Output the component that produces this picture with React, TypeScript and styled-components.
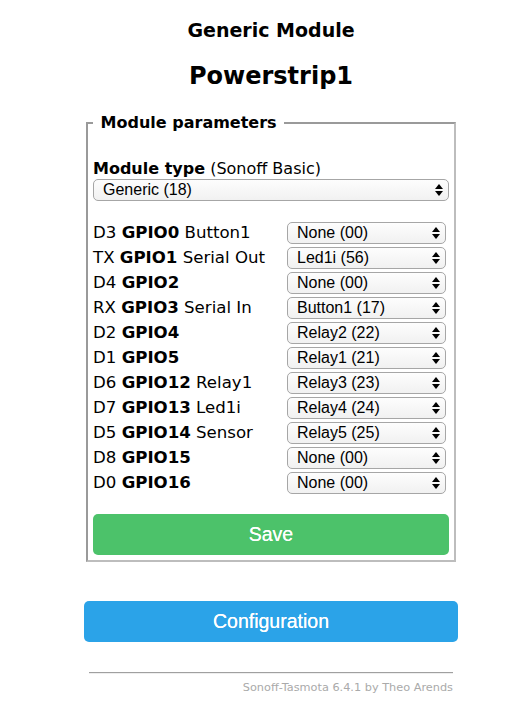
import React from "react";
import styled, { createGlobalStyle } from "styled-components";

const GlobalStyle = createGlobalStyle`
  html, body { margin: 0; padding: 0; background: #fff; }
  body { font-family: "DejaVu Sans", Verdana, sans-serif; color: #000; }
`;

const Page = styled.div`
  display: flex;
  justify-content: center;
  padding-left: 25px;
`;

const Container = styled.div`
  width: 374px;
  display: flex;
  flex-direction: column;
`;

const Header = styled.div`
  text-align: center;
  padding-top: 19px;
`;

const Title = styled.h3`
  margin: 0;
  font-size: 19px;
  line-height: 23px;
  font-weight: bold;
`;

const DeviceName = styled.h2`
  margin: 20px 0 0;
  font-size: 24px;
  line-height: 28px;
  font-weight: bold;
`;

const Fieldset = styled.fieldset`
  margin: 23px 2px 0;
  padding: 5px 5px 5px;
  border: 2px solid #9a9a9a;
  border-right-color: #bdbdbd;
  border-bottom-color: #bdbdbd;
  background: #fff;
`;

const Legend = styled.legend`
  padding: 0 2px;
  font-size: 16px;
  line-height: 20px;
  font-weight: bold;
`;

const TypeLabel = styled.div`
  margin-top: 21px;
  font-size: 16px;
  line-height: 20px;
`;

const SelectWrap = styled.div<{ $width?: string }>`
  position: relative;
  width: ${(p) => p.$width ?? "100%"};
  height: 22px;
`;

const NativeSelect = styled.select`
  appearance: none;
  -webkit-appearance: none;
  box-sizing: border-box;
  width: 100%;
  height: 22px;
  margin: 0;
  padding: 0 20px 0 9px;
  border: 1px solid #a6a6a6;
  border-radius: 5px;
  background: linear-gradient(#fdfdfd, #f1f1f1);
  font-family: "Liberation Sans", Arial, sans-serif;
  font-size: 16px;
  line-height: 20px;
  color: #000;
  outline: none;
`;

const Arrows = styled.svg`
  position: absolute;
  right: 6px;
  top: 5px;
  pointer-events: none;
`;

const Select: React.FC<{ value: string; width?: string }> = ({ value, width }) => (
  <SelectWrap $width={width}>
    <NativeSelect value={value} onChange={() => {}}>
      <option value={value}>{value}</option>
    </NativeSelect>
    <Arrows width="8" height="12" viewBox="0 0 8 12">
      <path d="M4 0 L8 5 L0 5 Z" fill="#000" />
      <path d="M0 7 L8 7 L4 12 Z" fill="#000" />
    </Arrows>
  </SelectWrap>
);

const GpioTable = styled.div`
  margin-top: 19px;
  display: grid;
  grid-template-columns: 194px 160px;
  grid-auto-rows: 25px;
  align-items: center;
`;

const Label = styled.div`
  font-size: 16.6px;
  line-height: 20px;
  white-space: nowrap;
`;

const Button = styled.button<{ $color: string }>`
  display: block;
  width: 100%;
  height: 41px;
  border: 0;
  border-radius: 5px;
  background: ${(p) => p.$color};
  color: #fff;
  font-family: "Liberation Sans", Arial, sans-serif;
  font-size: 19.5px;
  line-height: 41px;
  padding: 0;
  cursor: pointer;
  text-shadow: 0 0 0.5px #fff;
`;

const SaveButton = styled(Button)`
  margin-top: 19px;
`;

const ConfigButton = styled(Button)`
  margin-top: 39px;
`;

const Footer = styled.div`
  margin-top: 30px;
  text-align: right;
  font-size: 11.3px;
  line-height: 14px;
  padding: 0 5px;
`;

const Rule = styled.hr`
  margin: 0 0 7px;
  border: 0;
  border-top: 1px solid #a0a0a0;
  border-bottom: 1px solid #eee;
`;

const FooterLink = styled.a`
  color: #aaa;
  text-decoration: none;
`;

const rows: [string, string, string, string][] = [
  ["D3", "GPIO0", "Button1", "None (00)"],
  ["TX", "GPIO1", "Serial Out", "Led1i (56)"],
  ["D4", "GPIO2", "", "None (00)"],
  ["RX", "GPIO3", "Serial In", "Button1 (17)"],
  ["D2", "GPIO4", "", "Relay2 (22)"],
  ["D1", "GPIO5", "", "Relay1 (21)"],
  ["D6", "GPIO12", "Relay1", "Relay3 (23)"],
  ["D7", "GPIO13", "Led1i", "Relay4 (24)"],
  ["D5", "GPIO14", "Sensor", "Relay5 (25)"],
  ["D8", "GPIO15", "", "None (00)"],
  ["D0", "GPIO16", "", "None (00)"],
];

export default function App() {
  return (
    <>
      <GlobalStyle />
      <Page>
        <Container>
          <Header>
            <Title>Generic Module</Title>
            <DeviceName>Powerstrip1</DeviceName>
          </Header>
          <Fieldset>
            <Legend>&nbsp;Module parameters&nbsp;</Legend>
            <TypeLabel>
              <b>Module type</b> (Sonoff Basic)
            </TypeLabel>
            <Select value="Generic (18)" />
            <GpioTable>
              {rows.map(([pin, gpio, fn, val]) => (
                <React.Fragment key={gpio}>
                  <Label>
                    {pin} <b>{gpio}</b>
                    {fn ? ` ${fn}` : ""}
                  </Label>
                  <Select value={val} width="159px" />
                </React.Fragment>
              ))}
            </GpioTable>
            <SaveButton $color="#4cc26a">Save</SaveButton>
          </Fieldset>
          <ConfigButton $color="#2ba3e8">Configuration</ConfigButton>
          <Footer>
            <Rule />
            <FooterLink href="#">Sonoff-Tasmota 6.4.1 by Theo Arends</FooterLink>
          </Footer>
        </Container>
      </Page>
    </>
  );
}
